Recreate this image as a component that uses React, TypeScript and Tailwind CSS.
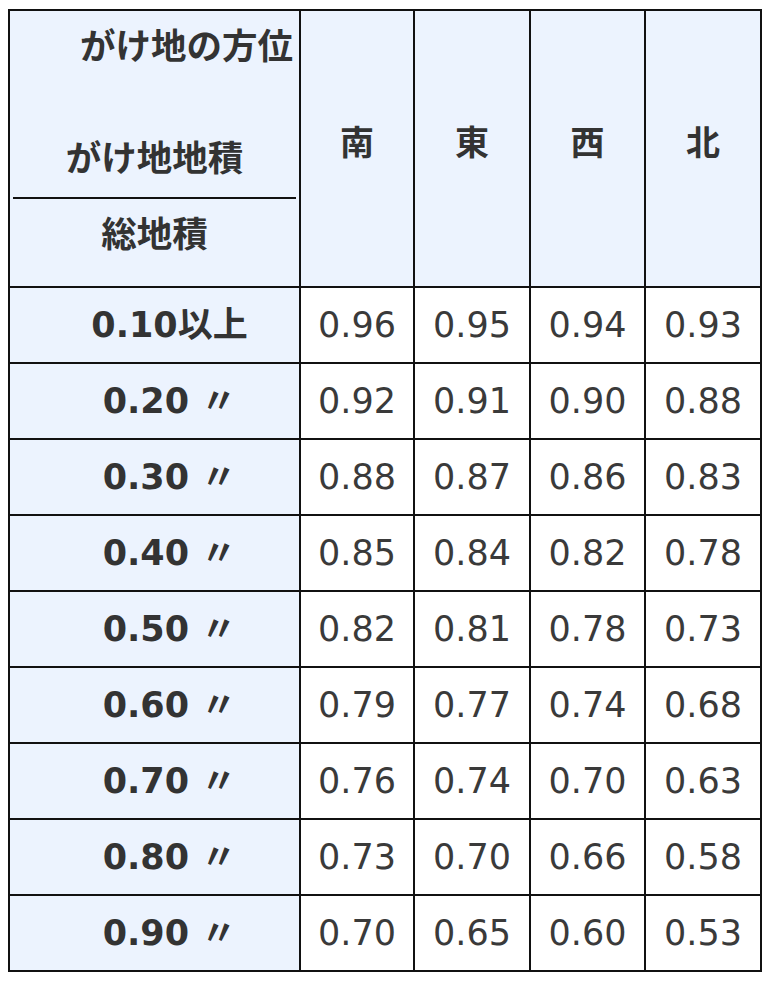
const rows = [
  ['0.10以上', '0.96', '0.95', '0.94', '0.93'],
  ['0.20 〃', '0.92', '0.91', '0.90', '0.88'],
  ['0.30 〃', '0.88', '0.87', '0.86', '0.83'],
  ['0.40 〃', '0.85', '0.84', '0.82', '0.78'],
  ['0.50 〃', '0.82', '0.81', '0.78', '0.73'],
  ['0.60 〃', '0.79', '0.77', '0.74', '0.68'],
  ['0.70 〃', '0.76', '0.74', '0.70', '0.63'],
  ['0.80 〃', '0.73', '0.70', '0.66', '0.58'],
  ['0.90 〃', '0.70', '0.65', '0.60', '0.53'],
]

const dirs = ['南', '東', '西', '北']

export default function App() {
  return (
    <div className="min-h-screen bg-white pl-[8px] pt-[9px] text-[#333] [font-family:'DejaVu_Sans','Noto_Sans_CJK_JP',sans-serif]">
      <table className="table-fixed border-collapse border-2 border-[#111]">
        <colgroup>
          <col className="w-[291px]" />
          <col className="w-[114px]" />
          <col className="w-[116px]" />
          <col className="w-[115px]" />
          <col className="w-[116px]" />
        </colgroup>
        <thead>
          <tr className="h-[277px] bg-[#ecf3fe]">
            <th className="border-2 border-[#111] p-0 align-top font-bold">
              <div className="flex h-[275px] flex-col px-[3px] [font-family:'Noto_Sans_CJK_JP',sans-serif]">
                <div className="pr-[3px] pt-[10px] text-right text-[35.5px] leading-[46px]">がけ地の方位</div>
                <div className="mt-[66px] border-b-2 border-[#111] pb-[18px] text-center text-[35.5px] leading-[46px]">がけ地地積</div>
                <div className="pt-[10px] text-center text-[35.5px] leading-[46px]">総地積</div>
              </div>
            </th>
            {dirs.map((d) => (
              <th
                key={d}
                className="border-2 border-[#111] p-0 pb-[16px] text-center align-middle text-[34px] font-bold [font-family:'Noto_Sans_CJK_JP',sans-serif]"
              >
                {d}
              </th>
            ))}
          </tr>
        </thead>
        <tbody>
          {rows.map((r) => (
            <tr key={r[0]} className="h-[76px]">
              <th className="border-2 border-[#111] bg-[#ecf3fe] p-0 pl-[30px] text-center align-middle text-[35px] font-bold">
                {r[0]}
              </th>
              {r.slice(1).map((v, i) => (
                <td key={i} className="border-2 border-[#111] bg-white p-0 text-center align-middle text-[35px] text-[#3a3a3a]">
                  {v}
                </td>
              ))}
            </tr>
          ))}
        </tbody>
      </table>
    </div>
  )
}
